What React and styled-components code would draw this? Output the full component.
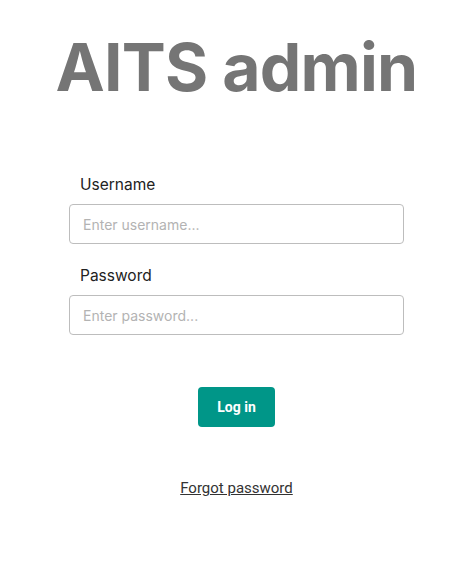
import React from 'react';
import styled, { createGlobalStyle } from 'styled-components';

const GlobalStyle = createGlobalStyle`
  body {
    margin: 0;
    background: #ffffff;
    font-family: Inter, "Noto Sans", sans-serif;
  }
`;

const Page = styled.main`
  display: flex;
  flex-direction: column;
  align-items: center;
  padding-top: 23px;
`;

const Title = styled.h1`
  margin: 0;
  font-family: Inter, sans-serif;
  font-size: 66px;
  font-weight: 700;
  line-height: 88px;
  color: #757575;
  letter-spacing: -0.8px;
`;

const Form = styled.form`
  width: 335px;
  margin-top: 64px;
  display: flex;
  flex-direction: column;
`;

const Field = styled.div`
  display: flex;
  flex-direction: column;
  margin-bottom: ${props => props.last ? '0' : '22px'};
`;

const Label = styled.label`
  font-family: Inter, sans-serif;
  font-size: 15.5px;
  color: #222;
  padding-left: 11px;
  margin-bottom: 9px;
  line-height: 20px;
`;

const Input = styled.input`
  box-sizing: border-box;
  height: 40px;
  width: 100%;
  padding: 0 13px;
  border: 1px solid #bdbdbd;
  border-radius: 4px;
  font-family: Inter, sans-serif;
  font-size: 14px;
  color: #222;
  outline: none;

  &::placeholder {
    color: #b3b3b3;
  }
`;

const Button = styled.button`
  align-self: center;
  margin-top: 52px;
  width: 77px;
  height: 40px;
  border: none;
  border-radius: 4px;
  background: #009688;
  color: #fff;
  font-family: Roboto, sans-serif;
  font-size: 14px;
  font-weight: 700;
  cursor: pointer;
`;

const ForgotLink = styled.a`
  margin-top: 52px;
  font-family: Roboto, sans-serif;
  font-size: 15px;
  color: #333;
  text-decoration: underline;
  cursor: pointer;
`;

export default function App() {
  return (
    <>
      <GlobalStyle />
      <Page>
        <Title>AITS admin</Title>
        <Form onSubmit={e => e.preventDefault()}>
          <Field>
            <Label>Username</Label>
            <Input placeholder="Enter username..." />
          </Field>
          <Field last>
            <Label>Password</Label>
            <Input type="password" placeholder="Enter password..." />
          </Field>
          <Button type="submit">Log in</Button>
        </Form>
        <ForgotLink>Forgot password</ForgotLink>
      </Page>
    </>
  );
}
